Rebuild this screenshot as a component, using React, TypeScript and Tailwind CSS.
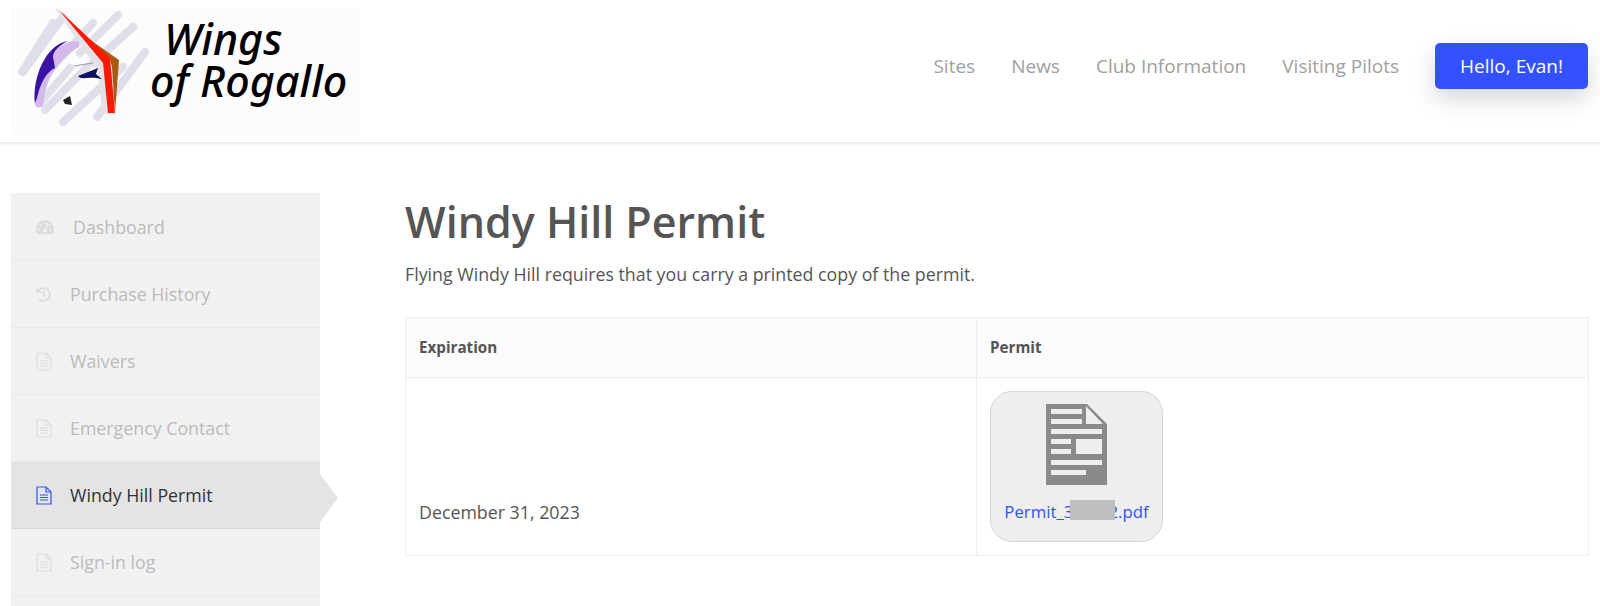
import { FaHistory, FaTachometerAlt } from "react-icons/fa";

const navLinks = ["Sites", "News", "Club Information", "Visiting Pilots"];

const sideItems = [
  { label: "Dashboard", icon: "gauge" },
  { label: "Purchase History", icon: "history" },
  { label: "Waivers", icon: "file" },
  { label: "Emergency Contact", icon: "file" },
  { label: "Windy Hill Permit", icon: "file", active: true },
  { label: "Sign-in log", icon: "file" },
];

function Logo() {
  return (
    <svg width="350" height="127" viewBox="0 0 350 127" className="block">
      <rect width="350" height="127" fill="#fcfcfd" />
      <g stroke="#dfdfea" strokeWidth="8" strokeLinecap="round" fill="none">
        <path d="M53 9 L13 64" />
        <path d="M12 64 L43 15" />
        <path d="M83 15 L33 69" />
        <path d="M108 7 L70 45" />
        <path d="M123 19 L83 55" />
        <path d="M135 44 L87 109" />
        <path d="M53 114 L113 59" />
        <path d="M35 102 L77 59" />
        <path d="M60 60 L30 95" />
      </g>
      <path d="M45 0 L49 2 L93 55 L100 107 L92 105 L88 62Z" fill="#e2e2e6" />
      <path d="M66 22 L109 52 L105 105 L102 59 L100 52Z" fill="#a85a10" />
      <path d="M49 2 L100 50 L105 105 L98 105 L93 55Z" fill="#f91a05" />
      <path d="M25 97 C22 70 40 34 66 33 C70 33 70 36 69 39 C58 45 46 58 45 62 C38 70 34 85 33 98 C30 100 26 100 25 97Z" fill="#d3b8ea" />
      <path d="M25 95 C22 70 36 36 58 33 C50 37 43 43 43 49 L45 60 C36 64 30 76 27 90Z" fill="#3a12a4" />
      <path d="M68 68 L88 60 L86 66 L92 71 L86 70 C78 69 71 72 68 68Z" fill="#101060" />
      <path d="M64 58 L83 55" stroke="#999" strokeWidth="1" />
      <path d="M53 92 L60 88 L62 97 L55 96Z" fill="#222" />
      <text x="154" y="47" fontFamily="'Noto Sans', sans-serif" fontStyle="italic" fontWeight="500" fontSize="43" fill="#000">Wings</text>
      <text x="140" y="89" fontFamily="'Noto Sans', sans-serif" fontStyle="italic" fontWeight="500" fontSize="43" fill="#000">of Rogallo</text>
    </svg>
  );
}

function FileIcon() {
  return (
    <svg width="16" height="19" viewBox="0 0 16 19" fill="none" stroke="currentColor" strokeWidth="1.2" className="block">
      <path d="M1 1H10L15 6V18H1Z" />
      <path d="M10 1V6H15" />
      <path d="M4 9H12M4 11.5H12M4 14H12" />
    </svg>
  );
}

function SideIcon({ name }: { name: string }) {
  if (name === "gauge") return <FaTachometerAlt size={18} />;
  if (name === "history") return <FaHistory size={15} />;
  return <FileIcon />;
}

function DocIcon() {
  return (
    <svg width="61" height="81" viewBox="0 0 61 81" className="block">
      <path d="M0 0H41L61 20V81H0Z" fill="#8a8a8a" />
      <g fill="#eeeeee">
        <path d="M40 2V20H57Z" />
        <rect x="5" y="5" width="31" height="5" />
        <rect x="5" y="15" width="31" height="5" />
        <rect x="5" y="25" width="51" height="5" />
        <rect x="5" y="35" width="20" height="5" />
        <rect x="5" y="45" width="20" height="5" />
        <rect x="30" y="35" width="26" height="15" />
        <rect x="5" y="56" width="51" height="5" />
        <rect x="5" y="66" width="35" height="5" />
      </g>
    </svg>
  );
}

export default function App() {
  return (
    <div className="h-[606px] overflow-hidden bg-white font-['Open_Sans',sans-serif] text-[#555]">
      <header className="flex h-[142px] items-center justify-between pl-[10px] pr-3 shadow-[0_1px_4px_rgba(0,0,0,0.14)]">
        <Logo />
        <nav className="flex items-center pb-[10px]">
          {navLinks.map((link) => (
            <a key={link} className="mr-9 text-[19px] text-[#a0a0a0]">
              {link}
            </a>
          ))}
          <a className="flex h-[46px] w-[153px] items-center justify-center rounded-[5px] bg-[#3351ff] text-[19px] text-white shadow-[0_10px_25px_rgba(0,0,0,0.16)]">
            Hello, Evan!
          </a>
        </nav>
      </header>

      <div className="flex pl-[11px] pr-[11px] pt-[51px]">
        <aside className="h-[500px] w-[309px] shrink-0 bg-[#f1f1f1] pt-px">
          {sideItems.map((item) => (
            <div
              key={item.label}
              className={
                item.active
                  ? "relative flex h-[67px] items-center border-b border-[#d9d9d9] bg-[#e4e4e4] pl-[25px] text-[#333]"
                  : "flex h-[67px] items-center border-b border-[#e8e8e8] pl-[25px] text-[#bbb]"
              }
            >
              <span
                className={
                  item.active
                    ? "flex w-[34px] items-center text-[#3351ff]"
                    : "flex w-[34px] items-center text-[#dcdcdc]"
                }
              >
                <SideIcon name={item.icon} />
              </span>
              <span className={item.icon === "gauge" ? "ml-[3px] text-[17.8px]" : "text-[17.8px]"}>
                {item.label}
              </span>
              {item.active && (
                <span className="absolute left-full top-[12px] h-0 w-0 border-y-[24px] border-l-[18px] border-y-transparent border-l-[#e4e4e4]" />
              )}
            </div>
          ))}
        </aside>

        <main className="ml-[85px] flex-1">
          <h1 className="-mt-px text-[43px] font-semibold leading-[60px] text-[#555]">Windy Hill Permit</h1>
          <p className="mt-[9px] text-[17.8px] leading-[26px]">
            Flying Windy Hill requires that you carry a printed copy of the permit.
          </p>
          <table className="mt-[30px] w-full table-fixed border-collapse border border-[#eee]">
            <thead>
              <tr className="h-[60px] bg-[#fbfbfb]">
                <th className="w-[571px] border border-[#eee] pl-[13px] text-left text-[15.2px] font-bold">Expiration</th>
                <th className="border border-[#eee] pl-[13px] text-left text-[15.2px] font-bold">Permit</th>
              </tr>
            </thead>
            <tbody>
              <tr>
                <td className="border border-[#eee] pb-[29px] pl-[13px] align-bottom text-[17.8px]">December 31, 2023</td>
                <td className="border border-[#eee] px-[13px] py-[13px]">
                  <div className="relative flex h-[151px] w-[173px] flex-col items-center rounded-[22px] border border-[#d5d5d5] bg-[#eee] pt-[12px]">
                    <DocIcon />
                    <a className="mt-[14px] text-[16.8px] text-[#3351ff]">Permit_3xxxx2.pdf</a>
                    <span className="absolute left-[79px] top-[108px] h-[20px] w-[45px] bg-[#bfbfbf]" />
                  </div>
                </td>
              </tr>
            </tbody>
          </table>
        </main>
      </div>
    </div>
  );
}
